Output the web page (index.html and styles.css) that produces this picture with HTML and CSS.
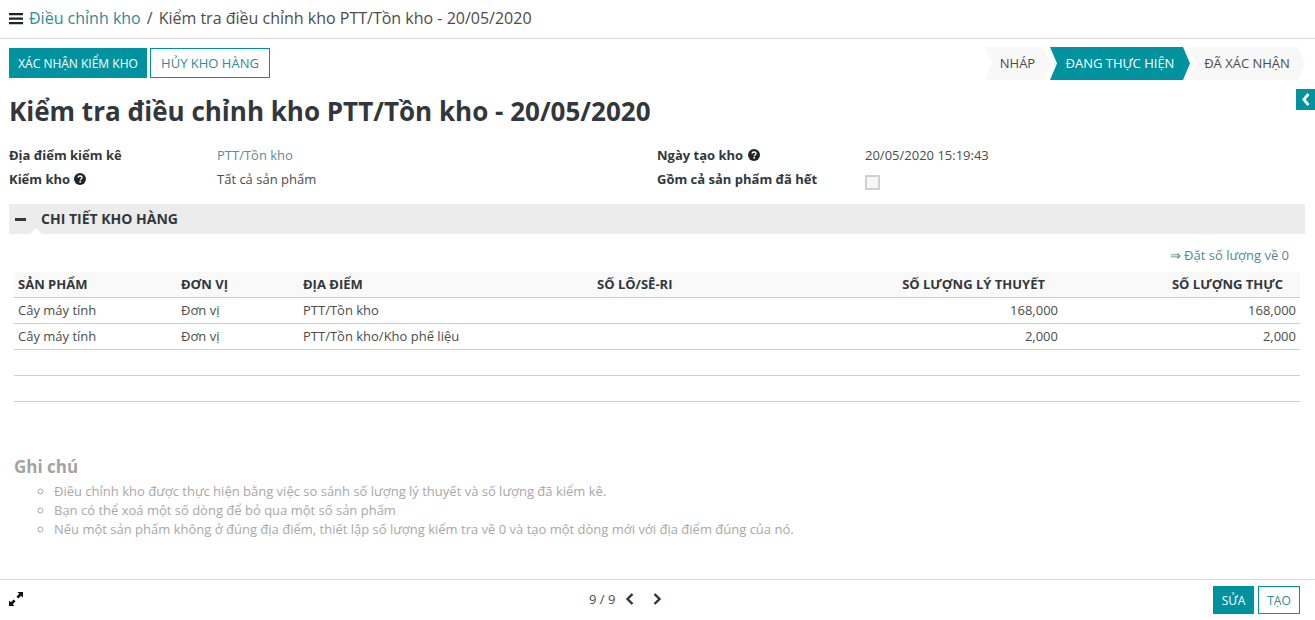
FILE: index.html
```html
<!DOCTYPE html>
<html lang="vi">
<head>
<meta charset="utf-8">
<title>Kiểm tra điều chỉnh kho</title>
<link rel="stylesheet" href="styles.css">
</head>
<body>
<header class="topbar">
  <svg class="menu-icon" viewBox="0 0 14 12" width="14" height="12"><path d="M0 0h14v2.200H0zM0 4.500h14v2.200H0zM0 9h14v2.200H0z" fill="#212529"/></svg>
  <a class="crumb-link">Điều chỉnh kho</a>
  <span class="crumb-sep">/</span>
  <span class="crumb-current">Kiểm tra điều chỉnh kho PTT/Tồn kho - 20/05/2020</span>
</header>
<main class="content">
  <div class="actions">
    <div class="action-buttons">
      <button class="btn btn-primary btn-confirm">XÁC NHẬN KIỂM KHO</button>
      <button class="btn btn-outline btn-cancel">HỦY KHO HÀNG</button>
    </div>
    <div class="statusbar">
      <span class="step step-first">NHÁP</span>
      <span class="step step-active">ĐANG THỰC HIỆN</span>
      <span class="step step-last">ĐÃ XÁC NHẬN</span>
    </div>
  </div>
  <h1 class="title">Kiểm tra điều chỉnh kho PTT/Tồn kho - 20/05/2020</h1>
  <div class="side-tab"><svg viewBox="0 0 10 13" width="10" height="13"><path d="M7.500 1 2.800 6.500l4.700 5.500" fill="none" stroke="#fff" stroke-width="2.800"/></svg></div>
  <div class="form-grid">
    <div class="label">Địa điểm kiểm kê</div>
    <div class="value link">PTT/Tồn kho</div>
    <div class="label">Ngày tạo kho <svg class="help" viewBox="0 0 12 12" width="12" height="12"><circle cx="6" cy="6" r="6" fill="#212529"/><path d="M4 4.600C4.100 3.500 5 3 6 3c1.200 0 2 .7 2 1.600 0 1.500-1.700 1.300-1.700 2.600" fill="none" stroke="#fff" stroke-width="1.300"/><rect x="5.400" y="8" width="1.600" height="1.500" fill="#fff"/></svg></div>
    <div class="value">20/05/2020 15:19:43</div>
    <div class="label">Kiểm kho <svg class="help" viewBox="0 0 12 12" width="12" height="12"><circle cx="6" cy="6" r="6" fill="#212529"/><path d="M4 4.600C4.100 3.500 5 3 6 3c1.200 0 2 .7 2 1.600 0 1.500-1.700 1.300-1.700 2.600" fill="none" stroke="#fff" stroke-width="1.300"/><rect x="5.400" y="8" width="1.600" height="1.500" fill="#fff"/></svg></div>
    <div class="value">Tất cả sản phẩm</div>
    <div class="label">Gồm cả sản phẩm đã hết</div>
    <div class="value"><span class="checkbox"></span></div>
  </div>
  <div class="section-head">
    <span class="minus"></span>
    <span class="section-title">CHI TIẾT KHO HÀNG</span>
    <span class="notch"></span>
  </div>
  <div class="reset-row"><a class="reset-link">⇒ Đặt số lượng về 0</a></div>
  <table class="lines">
    <colgroup>
      <col class="c1"><col class="c2"><col class="c3"><col class="c4"><col class="c5"><col class="c6">
    </colgroup>
    <thead>
      <tr><th>SẢN PHẨM</th><th>ĐƠN VỊ</th><th>ĐỊA ĐIỂM</th><th>SỐ LÔ/SÊ-RI</th><th class="num">SỐ LƯỢNG LÝ THUYẾT</th><th class="num">SỐ LƯỢNG THỰC</th></tr>
    </thead>
    <tbody>
      <tr><td>Cây máy tính</td><td>Đơn vị</td><td>PTT/Tồn kho</td><td></td><td class="num">168,000</td><td class="num">168,000</td></tr>
      <tr><td>Cây máy tính</td><td>Đơn vị</td><td>PTT/Tồn kho/Kho phế liệu</td><td></td><td class="num">2,000</td><td class="num">2,000</td></tr>
      <tr><td>&nbsp;</td><td></td><td></td><td></td><td></td><td></td></tr>
      <tr><td>&nbsp;</td><td></td><td></td><td></td><td></td><td></td></tr>
    </tbody>
  </table>
  <section class="notes">
    <h3 class="notes-title">Ghi chú</h3>
    <ul class="notes-list">
      <li>Điều chỉnh kho được thực hiện bằng việc so sánh số lượng lý thuyết và số lượng đã kiểm kê.</li>
      <li>Bạn có thể xoá một số dòng để bỏ qua một số sản phẩm</li>
      <li>Nếu một sản phẩm không ở đúng địa điểm, thiết lập số lượng kiểm tra về 0 và tạo một dòng mới với địa điểm đúng của nó.</li>
    </ul>
  </section>
</main>
<footer class="footer">
  <svg class="expand" viewBox="0 0 15 15" width="14" height="14"><path d="M15 0v6l-2-2-3 3-2-2 3-3-2-2zM0 15V9l2 2 3-3 2 2-3 3 2 2z" fill="#111"/></svg>
  <div class="pager">
    <span class="pager-text">9 / 9</span>
    <svg viewBox="0 0 10 12" width="10" height="12"><path d="M7.500 1 2.500 6l5 5" fill="none" stroke="#2c3440" stroke-width="2.400"/></svg>
    <svg class="pager-next" viewBox="0 0 10 12" width="10" height="12"><path d="M2.500 1l5 5-5 5" fill="none" stroke="#2c3440" stroke-width="2.400"/></svg>
  </div>
  <div class="footer-buttons">
    <button class="btn btn-primary btn-edit">SỬA</button>
    <button class="btn btn-outline btn-create">TẠO</button>
  </div>
</footer>
</body>
</html>
```

FILE: styles.css
```css
* { box-sizing: border-box; }
html, body { margin: 0; height: 620px; overflow: hidden; }
body {
  display: flex;
  flex-direction: column;
  font-family: "Open Sans", "Noto Sans", sans-serif;
  font-size: 13px;
  color: #4c4c4c;
  background: #fff;
}
.topbar {
  height: 39px;
  flex: none;
  display: flex;
  align-items: center;
  padding: 0 0 2px 9px;
  border-bottom: 1px solid #d8d8d8;
  font-size: 16px;
}
.menu-icon { margin-right: 6px; margin-top: 1px; }
.crumb-link { color: #2d8b9a; }
.crumb-sep { margin: 0 6px; color: #4c4c4c; }
.crumb-current { color: #4c4c4c; }
.content { position: relative; flex: 1; min-height: 0; padding: 9px 10px 0 9px; }
.actions { display: flex; justify-content: space-between; height: 33px; }
.action-buttons { display: flex; gap: 3px; height: 30px; }
.btn {
  font-family: inherit;
  font-size: 12px;
  height: 30px;
  padding: 0;
  border: 1px solid #00929f;
  cursor: pointer;
}
.btn-primary { background: #00929f; color: #fff; }
.btn-outline { background: #fff; color: #2d8b9a; }
.btn-confirm { width: 138px; }
.btn-cancel { width: 120px; font-size: 13px; }
.statusbar { display: flex; margin-top: -1px; font-size: 13px; }
.step {
  display: flex;
  align-items: center;
  justify-content: center;
  height: 33px;
  padding-bottom: 2px;
  background: #f8f8f8;
  color: #4c4c4c;
  clip-path: polygon(0 0, calc(100% - 7px) 0, 100% 50%, calc(100% - 7px) 100%, 0 100%, 7px 50%);
}
.step-first { width: 65px; }
.step-active { width: 140px; background: #00929f; color: #fff; }
.step-last { width: 116px; margin-left: -1px; }
.title {
  margin: 12px 0 0;
  font-size: 26px;
  line-height: 36px;
  font-weight: 700;
  color: #32373d;
}
.side-tab {
  position: absolute;
  top: 50px;
  right: 0;
  width: 19px;
  height: 21px;
  background: #00929f;
  display: flex;
  align-items: center;
  justify-content: center;
}
.form-grid {
  display: grid;
  grid-template-columns: 208px 440px 208px 1fr;
  grid-auto-rows: 24px;
  margin-top: 14px;
}
.label { font-weight: 700; color: #32373d; line-height: 24px; }
.value { line-height: 24px; color: #4c4c4c; }
.link { color: #5f8a96; }
.help { vertical-align: -1px; margin-left: 1px; }
.checkbox {
  display: inline-block;
  width: 15px;
  height: 15px;
  margin-top: 8px;
  border: 2px solid #d0d0d0;
  background: #f6f6f6;
  vertical-align: top;
}
.section-head {
  position: relative;
  height: 30px;
  margin-top: 13px;
  background: #ececec;
  display: flex;
  align-items: center;
}
.minus { width: 11px; height: 3px; background: #32373d; margin-left: 6px; margin-right: 15px; }
.section-title { font-size: 14px; font-weight: 700; color: #32373d; padding-bottom: 2px; }
.notch {
  position: absolute;
  left: 21px;
  bottom: 0;
  width: 0;
  height: 0;
  border-left: 6px solid transparent;
  border-right: 6px solid transparent;
  border-bottom: 6px solid #fff;
}
.reset-row { height: 38px; padding: 12px 16px 0 0; text-align: right; line-height: 18px; }
.reset-link { color: #4f8896; }
.lines {
  table-layout: fixed;
  border-collapse: collapse;
  width: 1286px;
  margin-left: 5px;
}
.c1 { width: 163px; } .c2 { width: 122px; } .c3 { width: 294px; }
.c4 { width: 235px; } .c5 { width: 234px; } .c6 { width: 238px; }
.lines th {
  height: 25px;
  padding: 0 4px;
  text-align: left;
  font-weight: 700;
  background: #f9f9f9;
  color: #32373d;
  border-bottom: 1px solid #cfcfcf;
}
.lines td { height: 26px; padding: 0 4px; border-bottom: 1px solid #cfcfcf; color: #4c4c4c; }
.lines .num { text-align: right; }
.lines th.num { padding-right: 17px; }
.notes { margin-left: 5px; margin-top: 54px; color: #a8a8a8; }
.notes-title { margin: 0; font-size: 17px; line-height: 22px; font-weight: 700; color: #a3a3a3; }
.notes-list { margin: 4px 0 0; padding-left: 40px; list-style: circle; line-height: 19px; }
.footer {
  height: 41px;
  flex: none;
  display: grid;
  grid-template-columns: 580px auto 1fr;
  align-items: center;
  padding: 0 15px 0 9px;
  border-top: 1px solid #d8d8d8;
}
.expand { display: block; margin-top: -3px; }
.pager { display: flex; align-items: center; gap: 10px; margin-top: -2px; }
.pager-next { margin-left: 7px; }
.footer-buttons { display: flex; justify-content: flex-end; gap: 4px; }
.btn-edit { width: 41px; height: 28px; }
.btn-create { width: 42px; height: 28px; }
```
